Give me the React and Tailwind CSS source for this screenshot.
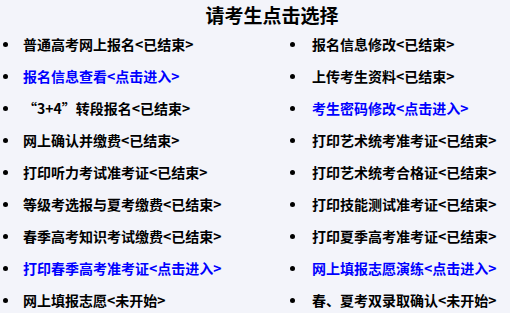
export default function App() {
  const left = [
    { t: '普通高考网上报名', s: '<已结束>' },
    { t: '报名信息查看', s: '<点击进入>', link: true },
    { t: '“3+4”转段报名', s: '<已结束>' },
    { t: '网上确认并缴费', s: '<已结束>' },
    { t: '打印听力考试准考证', s: '<已结束>' },
    { t: '等级考选报与夏考缴费', s: '<已结束>' },
    { t: '春季高考知识考试缴费', s: '<已结束>' },
    { t: '打印春季高考准考证', s: '<点击进入>', link: true },
    { t: '网上填报志愿', s: '<未开始>' },
  ];
  const right = [
    { t: '报名信息修改', s: '<已结束>' },
    { t: '上传考生资料', s: '<已结束>' },
    { t: '考生密码修改', s: '<点击进入>', link: true },
    { t: '打印艺术统考准考证', s: '<已结束>' },
    { t: '打印艺术统考合格证', s: '<已结束>' },
    { t: '打印技能测试准考证', s: '<已结束>' },
    { t: '打印夏季高考准考证', s: '<已结束>' },
    { t: '网上填报志愿演练', s: '<点击进入>', link: true },
    { t: '春、夏考双录取确认', s: '<未开始>' },
  ];

  const Item = ({ item, gap }) => (
    <li className="flex items-center h-[32px]">
      <span className={`w-[5px] h-[5px] rounded-full bg-black shrink-0 ${gap}`} />
      <span className={item.link ? 'text-[#0000ff]' : 'text-black'}>
        {item.t}
        {item.s}
      </span>
    </li>
  );

  return (
    <div
      className="w-[510px] h-[313px] bg-[#f3f4fa] overflow-hidden"
      style={{ fontFamily: '"Noto Sans CJK SC", "Noto Sans", sans-serif' }}
    >
      <h1 className="pl-[34px] pt-[2px] h-[28px] text-center text-[19px] leading-[26px] font-bold text-black">
        请考生点击选择
      </h1>
      <div className="grid grid-cols-[290px_1fr] text-[14px] font-bold leading-[32px]">
        <ul className="pl-[3px]">
          {left.map((item, i) => (
            <Item key={i} item={item} gap="mr-[15px]" />
          ))}
        </ul>
        <ul>
          {right.map((item, i) => (
            <Item key={i} item={item} gap="mr-[17px]" />
          ))}
        </ul>
      </div>
    </div>
  );
}
